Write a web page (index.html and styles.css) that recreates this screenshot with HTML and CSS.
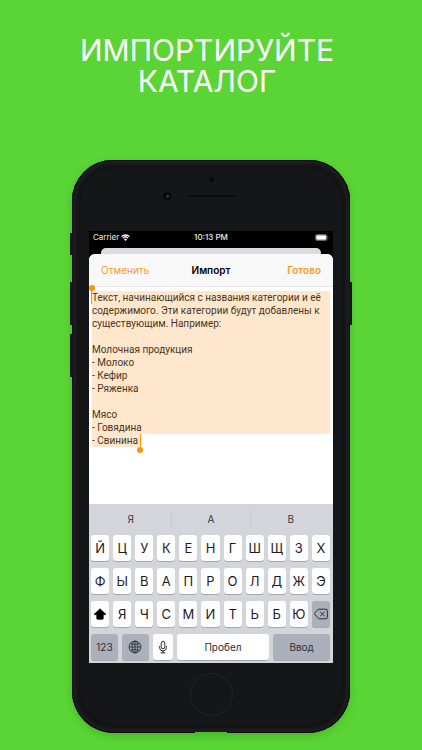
FILE: index.html
```html
<!DOCTYPE html>
<html lang="ru">
<head>
<meta charset="utf-8">
<meta name="viewport" content="width=device-width, initial-scale=1">
<title>Импортируйте каталог</title>
<link rel="stylesheet" href="styles.css">
</head>
<body>
<h1 class="headline">Импортируйте<br>каталог</h1>

<main class="phone">
  <span class="side side-mute"></span>
  <span class="side side-up"></span>
  <span class="side side-down"></span>
  <span class="side side-power"></span>

  <div class="bezel">
    <span class="sensor"></span>
    <div class="ear"><span class="camera"></span><span class="speaker"></span></div>
  </div>

  <div class="screen">
    <div class="status">
      <span class="carrier">Carrier
        <svg class="wifi" viewBox="0 0 18 14" aria-hidden="true">
          <path d="M9 14 5.9 10.6a4.6 4.6 0 0 1 6.2 0z" fill="#fff"/>
          <path d="M3.7 8.2a7.6 7.6 0 0 1 10.6 0M1 5.2a11.5 11.5 0 0 1 16 0" fill="none" stroke="#fff" stroke-width="2.6"/>
        </svg>
      </span>
      <span class="clock">10:13 PM</span>
      <svg class="battery" viewBox="0 0 28 14" aria-hidden="true">
        <rect x="1" y="1" width="23" height="12" rx="3" fill="none" stroke="#8c8c8c" stroke-width="1.4"/>
        <rect x="2.5" y="2.5" width="20" height="9" rx="2" fill="#fff"/>
        <path d="M25.6 4.8v4.4a2.6 2.6 0 0 0 0-4.4z" fill="#8c8c8c"/>
      </svg>
    </div>

    <div class="under-sheet"></div>
    <section class="sheet">
      <header class="nav">
        <button class="nav-btn" type="button">Отменить</button>
        <h2 class="title">Импорт</h2>
        <button class="nav-btn nav-done" type="button">Готово</button>
      </header>

      <div class="editor">
        <div class="selection">
          <div class="sel-full"></div>
          <div class="sel-tail"></div>
        </div>
        <textarea class="field" rows="12" aria-label="Текст для импорта" spellcheck="false">Текст, начинающийся с названия категории и её
содержимого. Эти категории будут добавлены к
существующим. Например:

Молочная продукция
- Молоко
- Кефир
- Ряженка

Мясо
- Говядина
- Свинина</textarea>
      </div>

      <div class="keyboard">
        <div class="suggest">
          <button type="button">Я</button><button type="button">А</button><button type="button">В</button>
        </div>
        <div class="row">
          <button type="button">Й</button><button type="button">Ц</button><button type="button">У</button><button type="button">К</button><button type="button">Е</button><button type="button">Н</button><button type="button">Г</button><button type="button">Ш</button><button type="button">Щ</button><button type="button">З</button><button type="button">Х</button>
        </div>
        <div class="row">
          <button type="button">Ф</button><button type="button">Ы</button><button type="button">В</button><button type="button">А</button><button type="button">П</button><button type="button">Р</button><button type="button">О</button><button type="button">Л</button><button type="button">Д</button><button type="button">Ж</button><button type="button">Э</button>
        </div>
        <div class="row">
          <button type="button" aria-label="Shift"><svg class="icon" viewBox="0 0 14 14"><path d="M7 1.8 13 7.6H10.2V11.6Q10.2 12.2 9.6 12.2H4.4Q3.8 12.2 3.8 11.6V7.6H1z" fill="#000" stroke="#000" stroke-width=".8" stroke-linejoin="round"/></svg></button><button type="button">Я</button><button type="button">Ч</button><button type="button">С</button><button type="button">М</button><button type="button">И</button><button type="button">Т</button><button type="button">Ь</button><button type="button">Б</button><button type="button">Ю</button><button type="button" class="dark" aria-label="Удалить"><svg class="icon" viewBox="0 0 14 14"><path d="M4.6 2.2H12a1.4 1.4 0 0 1 1.4 1.4v6.8A1.4 1.4 0 0 1 12 11.8H4.6L.6 7zM6.4 4.9l4 4.2M10.4 4.9l-4 4.2" fill="none" stroke="#2d3035" stroke-width="1" stroke-linejoin="round" stroke-linecap="round"/></svg></button>
        </div>
        <div class="row row-bottom">
          <button type="button" class="dark">123</button>
          <button type="button" class="dark" aria-label="Язык"><svg class="icon" viewBox="0 0 14 14"><g fill="none" stroke="#2d3035" stroke-width=".9"><circle cx="7" cy="7" r="5.9"/><ellipse cx="7" cy="7" rx="2.9" ry="5.9"/><path d="M7 1v12M1 7h12M2.2 3.7q4.8 1.6 9.6 0M2.2 10.3q4.8-1.6 9.6 0"/></g></svg></button>
          <button type="button" aria-label="Диктовка"><svg class="icon" viewBox="0 0 14 14"><g fill="none" stroke="#2d3035" stroke-width="1" stroke-linecap="round"><rect x="5.2" y="1.4" width="3.6" height="7.4" rx="1.8"/><path d="M3.6 6.4v1.2a3.4 3.4 0 0 0 6.8 0V6.4M7 11v1.9M5 12.9h4"/></g></svg></button>
          <button type="button">Пробел</button>
          <button type="button" class="dark">Ввод</button>
        </div>
      </div>
    </section>
  </div>

  <div class="chin"><button class="home" type="button" aria-label="Домой"></button></div>
</main>
</body>
</html>
```
FILE: styles.css
```css
* {
  box-sizing: border-box;
}

body {
  margin: 0;
  min-height: 100vh;
  background: #5bd536;
  font-family: Inter, "Liberation Sans", sans-serif;
  color: #000;
}

button {
  margin: 0;
  padding: 0;
  border: 0;
  background: none;
  color: inherit;
  font: inherit;
}

.headline {
  margin: 0;
  padding: 35px 8px 0 0;
  color: #fff;
  font-size: 30px;
  font-weight: 400;
  line-height: 31px;
  text-align: center;
  text-transform: uppercase;
}

.phone {
  position: relative;
  max-width: 420px;
  margin: 63px 72px 0;
  padding: 0 17px;
  background: #151618;
  border-radius: 41px 41px 42px 42px;
  box-shadow:
    inset 0 0 0 1px #0b0b0d,
    inset 0 0 3px 5px #1d1d20,
    inset 0 0 3px 7px #101113,
    0 3px 8px rgba(20, 90, 10, 0.25);
}

.phone::after {
  content: "";
  position: absolute;
  bottom: 0;
  left: 50%;
  width: 32px;
  height: 1px;
  margin-left: -16px;
  background: #4fbd30;
}

.side {
  position: absolute;
  left: -2px;
  width: 3px;
  background: #17181a;
}

.side-mute { top: 73px; height: 22px; }
.side-up { top: 122px; height: 43px; }
.side-down { top: 174px; height: 43px; }
.side-power { top: 122px; right: -2px; left: auto; height: 43px; }

.bezel {
  display: flex;
  flex-direction: column;
  align-items: center;
  height: 71px;
  padding-top: 17px;
}

.sensor {
  width: 5px;
  height: 5px;
  border-radius: 50%;
  background: #0a0a0c;
}

.ear {
  display: flex;
  align-items: center;
  gap: 17px;
  margin-top: 10px;
  padding-right: 24px;
}

.camera {
  width: 8px;
  height: 8px;
  border-radius: 50%;
  background: radial-gradient(circle at 60% 55%, #34363a 0 1px, #08080a 2px);
}

.speaker {
  width: 48px;
  height: 2px;
  border-radius: 1px;
  background: #0a0a0c;
}

.screen {
  background: #000;
}

.status {
  display: grid;
  grid-template-columns: 1fr auto 1fr;
  align-items: center;
  height: 17px;
  padding: 0 4px 5px;
  color: #f0f0f0;
  font-size: 8px;
  line-height: 12px;
}

.carrier {
  display: flex;
  align-items: center;
  gap: 2px;
}

.wifi {
  width: 9px;
  height: 7px;
}

.clock {
  font-weight: 500;
}

.battery {
  justify-self: end;
  width: 14px;
  height: 7px;
}

.under-sheet {
  height: 6px;
  margin: 0 12px;
  border-radius: 5px 5px 0 0;
  background: #dcdcde;
}

.sheet {
  border-radius: 6px 6px 0 0;
  background: #fff;
}

.nav {
  display: grid;
  grid-template-columns: 1fr auto 1fr;
  align-items: center;
  height: 33px;
  padding: 0 12px;
  border-bottom: 1px solid #e6e6e8;
  border-radius: 6px 6px 0 0;
  background: #f8f8f9;
  font-size: 10px;
  line-height: 14px;
}

.nav-btn {
  justify-self: start;
  color: #fb9a26;
}

.nav-done {
  justify-self: end;
  font-weight: 600;
}

.title {
  margin: 0;
  font-size: 10px;
  font-weight: 600;
}

.editor {
  display: grid;
  height: 217px;
  padding: 4px 3px 0;
}

.selection,
.field {
  grid-area: 1 / 1;
}

.sel-full,
.sel-tail {
  position: relative;
  background: #ffe7cd;
}

.sel-full {
  height: 143px;
}

.sel-tail {
  width: 48px;
  height: 13px;
}

.sel-full::before,
.sel-tail::before,
.sel-full::after,
.sel-tail::after {
  content: "";
  position: absolute;
  background: #fd9209;
}

.sel-full::before,
.sel-tail::before {
  width: 1px;
  height: 13px;
}

.sel-full::before { top: 0; left: -1px; }
.sel-tail::before { top: 0; right: -1px; }

.sel-full::after,
.sel-tail::after {
  width: 6px;
  height: 6px;
  border-radius: 50%;
}

.sel-full::after { top: -6px; left: -3px; }
.sel-tail::after { bottom: -6px; right: -3px; }

.field {
  position: relative;
  display: block;
  width: 100%;
  margin: 0;
  padding: 0;
  border: 0;
  outline: 0;
  overflow: hidden;
  resize: none;
  background: transparent;
  color: #4a3520;
  white-space: pre;
  font: 10px/13px Roboto, "Liberation Sans", sans-serif;
}

.keyboard {
  display: flex;
  flex-direction: column;
  gap: 7px;
  padding: 0 3px 3px 2px;
  background: #d3d5db;
}

.suggest {
  display: grid;
  grid-template-columns: repeat(3, 1fr);
  align-items: center;
  height: 24px;
  padding-top: 6px;
  color: #36383c;
  font-size: 10px;
  line-height: 18px;
}

.suggest button + button {
  border-left: 1px solid #c5c8cd;
}

.row {
  display: grid;
  grid-template-columns: repeat(11, 1fr);
  gap: 4px;
}

.row-bottom {
  grid-template-columns: 27fr 27fr 20fr 93fr 57fr;
}

.row button {
  display: flex;
  align-items: center;
  justify-content: center;
  min-width: 0;
  height: 26px;
  border-radius: 3px;
  background: #fff;
  box-shadow: 0 1px 0 #a5a8ae;
  color: #1c1c1e;
  font-size: 13px;
}

.row-bottom button {
  color: #2d3035;
  font-size: 10px;
}

.row .dark {
  background: #abb0bb;
}

.icon {
  flex: none;
  width: 14px;
  height: 14px;
}

.chin {
  display: flex;
  justify-content: center;
  height: 70px;
  padding-top: 10px;
}

.home {
  width: 43px;
  height: 43px;
  border: 1px solid #242527;
  border-radius: 50%;
}
```
